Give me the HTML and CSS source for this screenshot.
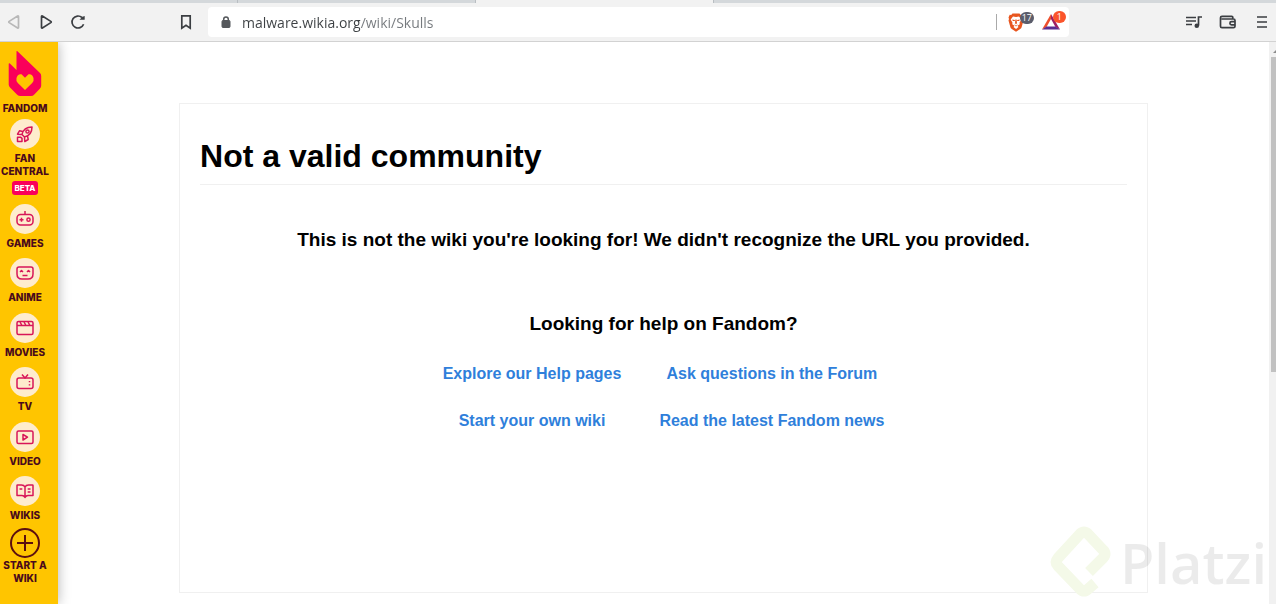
FILE: index.html
```html
<!DOCTYPE html>
<html lang="en">
<head>
    <meta charset="utf-8">
    <title>Not a valid community</title>
    <link rel="stylesheet" href="styles.css">
</head>
<body>

<!-- browser bar -->
<header class="browser">
    <div class="tab-strip">
        <span class="tab"></span>
        <span class="tab"></span>
        <span class="tab tab-active"></span>
        <span class="tab tab-rest"></span>
    </div>
    <div class="toolbar">
        <div class="nav-buttons">
            <button type="button" class="icon-btn disabled" aria-label="Back">
                <svg width="16" height="16" viewBox="0 0 16 16"><path d="M12.5 2.6v10.8q0 1-.9.5L3.2 8.6q-.9-.6 0-1.2l8.4-5.3q.9-.5.9.5z"/></svg>
            </button>
            <button type="button" class="icon-btn" aria-label="Forward">
                <svg width="16" height="16" viewBox="0 0 16 16"><path d="M3.5 2.6v10.8q0 1 .9.5l8.4-5.3q.9-.6 0-1.2L4.4 2.1q-.9-.5-.9.5z"/></svg>
            </button>
            <button type="button" class="icon-btn" aria-label="Reload">
                <svg width="16" height="16" viewBox="0 0 16 16"><path d="M13.6 10.2A6 6 0 1 1 12 3.5"/><path class="solid" d="M9.5 5.8h4.7q.5 0 .5-.5V2l-2.2.7z"/></svg>
            </button>
        </div>
        <button type="button" class="icon-btn" aria-label="Bookmark this page">
            <svg width="16" height="16" viewBox="0 0 16 16"><path d="M3.8 1.8h8.4v12.4L8 11.2l-4.2 3z"/></svg>
        </button>
        <form class="address">
            <svg class="lock" width="10" height="12" viewBox="0 0 10 12"><rect x="1" y="4.5" width="8" height="7" rx="1"/><path d="M2.7 5V3.2a2.3 2.3 0 0 1 4.6 0V5"/></svg>
            <input class="url" type="text" aria-label="Address" value="malware.wikia.org/wiki/Skulls">
            <span class="divider"></span>
            <button type="button" class="shield" aria-label="Shields">
                <svg width="16" height="19" viewBox="0 0 16 19">
                    <path fill="#e8561f" d="M4.5.5h7l1.3 1.5 1.5-.2 1.2 2.7-.5 1.5.5 1.5-1.9 6.700q-.3 1-1.400 1.800L8 18.800 3.800 16q-1.100-.8-1.400-1.800L.5 7.500 1 6 .5 4.500l1.200-2.700 1.500.2z"/>
                    <path fill="#fff" d="M5 3.500l3 .6 3-.6 2.300 3-1.800 3.200.3 1.600-2.300 1.500 1 1.200L8 16l-2.500-2 1-1.200-2.300-1.500.3-1.600L2.700 6.500z"/>
                    <path fill="#e8561f" d="M4.200 6.500l2.500.6.3 1-2.200-.2zM11.800 6.500l-2.500.6-.3 1 2.200-.2zM7.400 6.500h1.200l.4 3.700-1 1-1-1zM5.800 11.300L8 12.400l2.200-1.100L8 13.400z"/>
                </svg>
                <span class="count">17</span>
            </button>
            <button type="button" class="rewards" aria-label="Rewards">
                <svg width="18" height="16" viewBox="0 0 18 16">
                    <path fill="#ee4f2d" d="M9 0L0 15.500 4.500 13 9 5z"/>
                    <path fill="#9e1f63" d="M9 0l9 15.500L13.500 13 9 5z"/>
                    <path fill="#5b2d91" d="M0 15.500h18L13.500 12.500h-9z"/>
                </svg>
                <span class="count">1</span>
            </button>
        </form>
        <div class="menu-buttons">
            <button type="button" class="icon-btn" aria-label="Media">
                <svg width="18" height="16" viewBox="0 0 18 16"><path d="M1 3.500h10M1 7h10M1 10.500h6M13.500 11.500V3H17"/><circle class="solid" cx="11.800" cy="11.800" r="2.300"/></svg>
            </button>
            <button type="button" class="icon-btn" aria-label="Wallet">
                <svg width="18" height="16" viewBox="0 0 18 16"><path d="M13.800 5V3.500q0-1.200-1.200-1.200H3q-1.500 0-1.500 1.500v8.400q0 1.500 1.500 1.500h11.500q1.500 0 1.500-1.500V6.500Q16 5 14.500 5H2.500M16 7.600h-3.500a1.600 1.600 0 0 0 0 3.200H16"/></svg>
            </button>
            <button type="button" class="icon-btn" aria-label="Menu">
                <svg width="18" height="16" viewBox="0 0 18 16"><path d="M4 3h10M4 8h10M4 13h10"/></svg>
            </button>
        </div>
    </div>
</header>

<div class="page">

    <!-- yellow side navigation -->
    <nav class="sidebar">
        <a class="logo" href="#">
            <svg width="34" height="46" viewBox="0 0 34 46">
                <path fill="#fa005a" d="M8.500.8q0-1.500 1.200-.4L32 22q1.200 1.200 1.200 3v9.500q0 2-1.400 3.300l-5.500 5.700Q25 45 23 45H12.500q-2 0-3.300-1.300L2 36.500Q.7 35 .7 33.500V13.200q0-1.500 1.200-.6L8.500 19z"/>
                <path fill="#ffc500" d="M17 39l-7.200-7q-2-2-1.300-5 1-3.800 3.900-3.800h1.100L17 26.700l3.500-3.500h1.100q2.900 0 3.900 3.800.7 3-1.300 5z"/>
            </svg>
            <span>FANDOM</span>
        </a>
        <ul class="topics">
            <li><a href="#">
                <span class="circle"><svg width="18" height="18" viewBox="0 0 18 18"><path d="M6 9.500C7 5 10.500 2 16 2c0 5.500-3 9-7.500 10zM6.800 6.500L3.500 5.800 1.500 9.200l4.500.3M11.500 11l.7 3.500-3.400 2-.3-4.500M1.500 12.300h3.300l1.200 1V16.500H1.500z"/><circle cx="11.500" cy="6.500" r="1.600"/></svg></span>
                <span>FAN CENTRAL</span>
                <span class="beta">BETA</span>
            </a></li>
            <li><a href="#">
                <span class="circle"><svg width="18" height="18" viewBox="0 0 18 18"><rect x="1" y="4.500" width="16" height="10.500" rx="3.500"/><path d="M9 1v3.500M3.500 9.700h4M5.500 7.700v4"/><circle cx="12.500" cy="9.700" r="1.600"/></svg></span>
                <span>GAMES</span>
            </a></li>
            <li><a href="#">
                <span class="circle"><svg width="18" height="18" viewBox="0 0 18 18"><path d="M3 3h12q2 0 2 2v5q0 5-5 5H6q-5 0-5-5V5q0-2 2-2zM4 8l1.500-1.500L7 8M11 8l1.500-1.500L14 8M6.500 11.500h5"/></svg></span>
                <span>ANIME</span>
            </a></li>
            <li><a href="#">
                <span class="circle"><svg width="18" height="18" viewBox="0 0 18 18"><rect x="1" y="2.500" width="16" height="13" rx="1.500"/><path d="M1 6.500h16M4 3l2 3.500M8 3l2 3.500M12 3l2 3.500"/></svg></span>
                <span>MOVIES</span>
            </a></li>
            <li><a href="#">
                <span class="circle"><svg width="18" height="18" viewBox="0 0 18 18"><rect x="1" y="5" width="16" height="10.500" rx="2"/><path d="M6 1.500L9 5l3-3.500M13.500 8v1.200M13.500 11.300v1.200"/></svg></span>
                <span>TV</span>
            </a></li>
            <li><a href="#">
                <span class="circle"><svg width="18" height="18" viewBox="0 0 18 18"><rect x="1" y="3" width="16" height="12.500" rx="1.500"/><path d="M7 6.500l4.500 2.700L7 12z"/></svg></span>
                <span>VIDEO</span>
            </a></li>
            <li><a href="#">
                <span class="circle"><svg width="18" height="18" viewBox="0 0 18 18"><path d="M9 5Q8 3 5.500 3H1.500q-.5 0-.5.5v10h5Q8 13.500 9 15.500q1-2 3-2h5v-10q0-.5-.5-.5h-4Q10 3 9 5zV15M3.500 7h2.800M11.700 7h2.800M11.700 10h2.800"/></svg></span>
                <span>WIKIS</span>
            </a></li>
        </ul>
        <a class="start" href="#">
            <svg width="30" height="30" viewBox="0 0 30 30"><circle cx="15" cy="15" r="14"/><path d="M15 7v16M7 15h16"/></svg>
            <span>START A WIKI</span>
        </a>
    </nav>

    <main class="content">
        <section class="card">
            <h1>Not a valid community</h1>
            <h2 class="message">This is not the wiki you're looking for! We didn't recognize the URL you provided.</h2>
            <h2 class="help">Looking for help on Fandom?</h2>
            <div class="links">
                <a href="#">Explore our Help pages</a>
                <a href="#">Ask questions in the Forum</a>
                <a href="#">Start your own wiki</a>
                <a href="#">Read the latest Fandom news</a>
            </div>
        </section>
    </main>

    <div class="scrollbar">
        <span class="arrow"></span>
        <span class="thumb"></span>
    </div>

    <div class="watermark">
        <svg width="62" height="72" viewBox="0 0 62 72"><path d="M39 46L53 32q4-4 0-8L38 8q-4-4-8 0L8 32q-3.500 4 0 8l22 23q4 4 8 0l7-6"/></svg>
        <span>Platzi</span>
    </div>
</div>

</body>
</html>
```
FILE: styles.css
```css
* {
    box-sizing: border-box;
}

body {
    margin: 0;
    min-height: 100vh;
    display: flex;
    flex-direction: column;
    background-color: #fff;
    font-family: "Liberation Sans", Arial, sans-serif;
    color: #000;
}

a {
    text-decoration: none;
}

button {
    border: 0;
    padding: 0;
    background: none;
}

svg {
    display: block;
    fill: none;
}

/* browser bar */
.tab-strip {
    display: flex;
    height: 3px;
    background-color: #d4d8db;
}

.tab {
    width: 238px;
    border-right: 1px solid #b9bec2;
}

.tab-active {
    background-color: #f2f2f2;
}

.tab-rest {
    flex: 1;
    border-right: 0;
}

.toolbar {
    display: flex;
    align-items: center;
    height: 39px;
    padding: 0 5px 0 6px;
    background-color: #f2f2f2;
    border-bottom: 1px solid #d2d2d2;
}

.nav-buttons {
    display: flex;
    gap: 16px;
    margin-right: 92px;
}

.icon-btn svg {
    stroke: #3b3e42;
    stroke-width: 1.7;
}

.icon-btn .solid {
    fill: #3b3e42;
    stroke: none;
}

.disabled svg {
    stroke: #b8b8b8;
}

.address {
    display: flex;
    align-items: center;
    flex: 1;
    height: 30px;
    margin: 0 116px 0 14px;
    padding: 0 0 0 13px;
    background-color: #fff;
    border-radius: 4px;
}

.lock {
    fill: #55585c;
    stroke: #55585c;
}

.lock path {
    fill: none;
    stroke-width: 1.5;
}

.url {
    flex: 1;
    min-width: 0;
    height: 24px;
    margin: 0 10px;
    padding: 0 0 0 1px;
    border: 0;
    outline: 0;
    font-family: "Open Sans", sans-serif;
    font-size: 14px;
    /* host is darker than the path */
    color: transparent;
    background-image: linear-gradient(to right, #3c4043 119px, #75797d 119px);
    -webkit-background-clip: text;
    background-clip: text;
}

.divider {
    width: 1px;
    height: 16px;
    margin-right: 11px;
    background-color: #aaa;
}

.shield,
.rewards {
    position: relative;
    width: 34px;
}

.rewards {
    width: 27px;
}

.count {
    position: absolute;
    top: -1px;
    right: 8px;
    height: 12px;
    padding: 0 2px;
    border-radius: 6px;
    background-color: #5b5d6b;
    color: #fff;
    font-family: "Open Sans", sans-serif;
    font-size: 9px;
    line-height: 12px;
}

.rewards .count {
    top: -3px;
    right: 3px;
    padding: 0 4px;
    background-color: #fb542b;
}

.menu-buttons {
    display: flex;
    gap: 16px;
}

/* page */
.page {
    position: relative;
    display: flex;
    flex: 1;
}

.sidebar {
    z-index: 1;
    display: flex;
    flex-direction: column;
    width: 58px;
    padding: 9px 8px 19px 0;
    background-color: #ffc500;
    box-shadow: 0 0 12px rgba(0, 0, 0, 0.3);
    clip-path: inset(0 -20px 0 0);
    font-family: Inter, sans-serif;
    font-size: 10px;
    font-weight: 800;
    line-height: 13px;
    text-align: center;
}

.sidebar a {
    display: flex;
    flex-direction: column;
    align-items: center;
    color: #4a0a1c;
}

.logo {
    gap: 5px;
    margin-bottom: 4px;
}

.topics {
    display: flex;
    flex: 1;
    flex-direction: column;
    justify-content: space-between;
    margin: 0;
    padding: 0;
    list-style: none;
}

.topics a {
    gap: 3px;
}

.circle {
    display: flex;
    align-items: center;
    justify-content: center;
    width: 30px;
    height: 30px;
    border-radius: 50%;
    background-color: #feeccd;
}

.circle svg {
    stroke: #d81658;
    stroke-width: 1.5;
    stroke-linejoin: round;
}

.beta {
    padding: 0 2px;
    border-radius: 3px;
    background-color: #fa005a;
    color: #fff;
    font-size: 8px;
    line-height: 14px;
}

.start {
    margin-top: 6px;
    gap: 1px;
}

.start svg {
    stroke: #5c1010;
    stroke-width: 2;
}

.content {
    display: flex;
    flex: 1;
    justify-content: center;
    padding: 61px 0 11px;
}

.card {
    width: 80%;
    padding: 20px;
    border: 1px solid #f0f0f0;
}

h1 {
    margin: 0;
    padding: 12px 0 8px;
    border-bottom: 1px solid #f0f0f0;
    font-size: 32px;
    line-height: 40px;
}

h2 {
    margin: 0;
    font-size: 19px;
    line-height: 24px;
    text-align: center;
}

.message {
    margin-top: 43px;
}

.help {
    margin-top: 60px;
}

.links {
    display: grid;
    grid-template-columns: auto auto;
    justify-content: center;
    justify-items: center;
    gap: 27px 38px;
    margin-top: 28px;
    line-height: 20px;
}

.links a {
    color: #2f7fdb;
    font-size: 16px;
    font-weight: bold;
}

.scrollbar {
    display: flex;
    flex-direction: column;
    align-items: flex-end;
    width: 7px;
    background-color: #f1f1f1;
}

.arrow {
    width: 0;
    margin: 8px 0 4px;
    border-left: 3px solid transparent;
    border-bottom: 3px solid #8b8b8b;
}

.thumb {
    width: 5px;
    height: 56%;
    background-color: #c1c1c1;
}

/* logo that floats over the corner of the page */
.watermark {
    position: absolute;
    right: 9px;
    bottom: 6px;
    display: flex;
    align-items: center;
    gap: 8px;
    color: rgba(0, 0, 0, 0.08);
    font-family: "Open Sans", sans-serif;
    font-size: 56px;
    font-weight: 600;
    line-height: 72px;
}

.watermark svg {
    stroke: #f4f9e8;
    stroke-width: 11;
}
```
